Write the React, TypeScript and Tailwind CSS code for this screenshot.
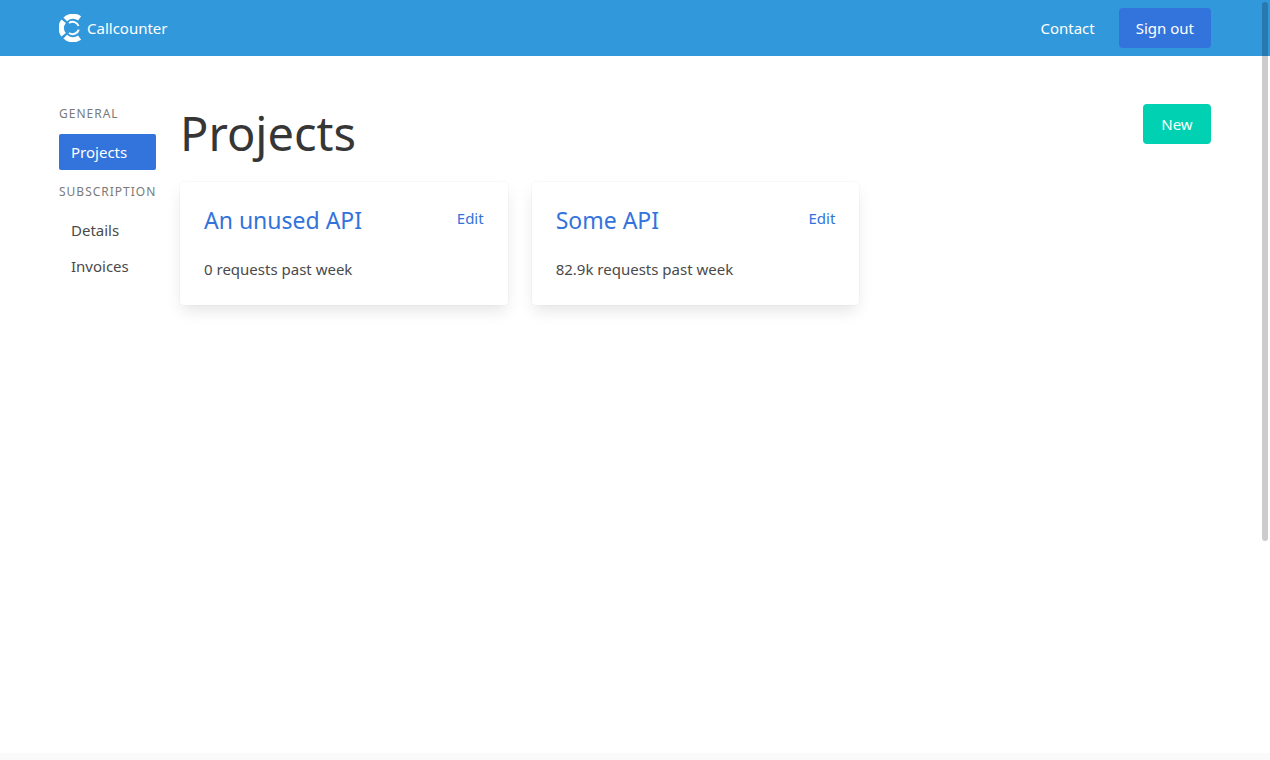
import React from 'react';

interface Project {
  id: number;
  name: string;
  requests: string;
}

interface MenuSection {
  label: string;
  items: string[];
}

const projects: Project[] = [
  { id: 1, name: 'An unused API', requests: '0' },
  { id: 2, name: 'Some API', requests: '82.9k' },
];

const menu: MenuSection[] = [
  { label: 'General', items: ['Projects'] },
  { label: 'Subscription', items: ['Details', 'Invoices'] },
];

function Logo() {
  return (
    <svg className="w-[22px] h-7" viewBox="0 0 22 28" fill="none" stroke="#fff" aria-hidden="true">
      <path d="M6.2 5.4A11.2 11.2 0 0 1 20.6 4.4" strokeWidth="5.2" />
      <path d="M4.6 7.2A11.2 11.2 0 0 0 4.6 20.8" strokeWidth="5.6" />
      <path d="M6.2 22.6A11.2 11.2 0 0 0 20.6 23.6" strokeWidth="5.2" />
      <path d="M10 9A6.4 6.4 0 0 1 19.6 12" strokeWidth="2" />
      <path d="M19.8 15.6A6.4 6.4 0 0 1 10 19" strokeWidth="2" />
    </svg>
  );
}

function Navbar() {
  return (
    <header className="bg-[#3298dc] px-6">
      <nav className="max-w-[1152px] h-14 mx-auto flex items-center justify-between text-white">
        <a href="#" className="flex items-center gap-1.5">
          <Logo />
          Callcounter
        </a>
        <div className="flex items-center gap-6">
          <a href="#">Contact</a>
          <button type="button" className="h-10 px-[17px] rounded bg-[#3273dc]">Sign out</button>
        </div>
      </nav>
    </header>
  );
}

function Sidebar({ active }: { active: string }) {
  return (
    <aside className="w-[97px] shrink-0 space-y-3">
      {menu.map((section) => (
        <div key={section.label}>
          <p className="mb-2.5 text-xs leading-5 tracking-[1px] uppercase text-[#7a7a7a]">{section.label}</p>
          <ul>
            {section.items.map((item) => (
              <li key={item}>
                <a
                  href="#"
                  className={`block px-3 py-1.5 rounded-xs ${
                    item === active ? 'bg-[#3273dc] text-white' : 'text-[#4a4a4a]'
                  }`}
                >
                  {item}
                </a>
              </li>
            ))}
          </ul>
        </div>
      ))}
    </aside>
  );
}

function ProjectCard({ project }: { project: Project }) {
  return (
    <div className="p-6 rounded bg-white shadow-[0_8px_16px_-2px_rgba(10,10,10,0.1),0_0_0_1px_rgba(10,10,10,0.02)]">
      <div className="mb-[23px] flex items-start justify-between text-[#3273dc]">
        <h2 className="text-[23px] leading-7">
          <a href="#">{project.name}</a>
        </h2>
        <a href="#">Edit</a>
      </div>
      <p>{project.requests} requests past week</p>
    </div>
  );
}

export default function App() {
  return (
    <div className="relative min-h-screen flex flex-col bg-white font-['Noto_Sans',sans-serif] text-[15px] leading-6 text-[#4a4a4a]">
      <Navbar />
      <main className="grow px-6 py-12">
        <div className="max-w-[1152px] mx-auto flex gap-6">
          <Sidebar active="Projects" />
          <section className="grow">
            <div className="mb-5 flex items-start justify-between">
              <h1 className="text-[47px] leading-[58px] text-[#363636]">Projects</h1>
              <button type="button" className="min-w-[68px] h-10 px-4 rounded bg-[#00d1b2] text-white">New</button>
            </div>
            <div className="grid grid-cols-3 gap-6">
              {projects.map((project) => (
                <ProjectCard key={project.id} project={project} />
              ))}
            </div>
          </section>
        </div>
      </main>
      <footer className="h-[7px] bg-[#fafafa]" />
      {/* overlay scrollbar thumb */}
      <div className="absolute top-0.5 right-0.5 w-1.5 h-[539px] rounded-full bg-black/20" />
    </div>
  );
}
